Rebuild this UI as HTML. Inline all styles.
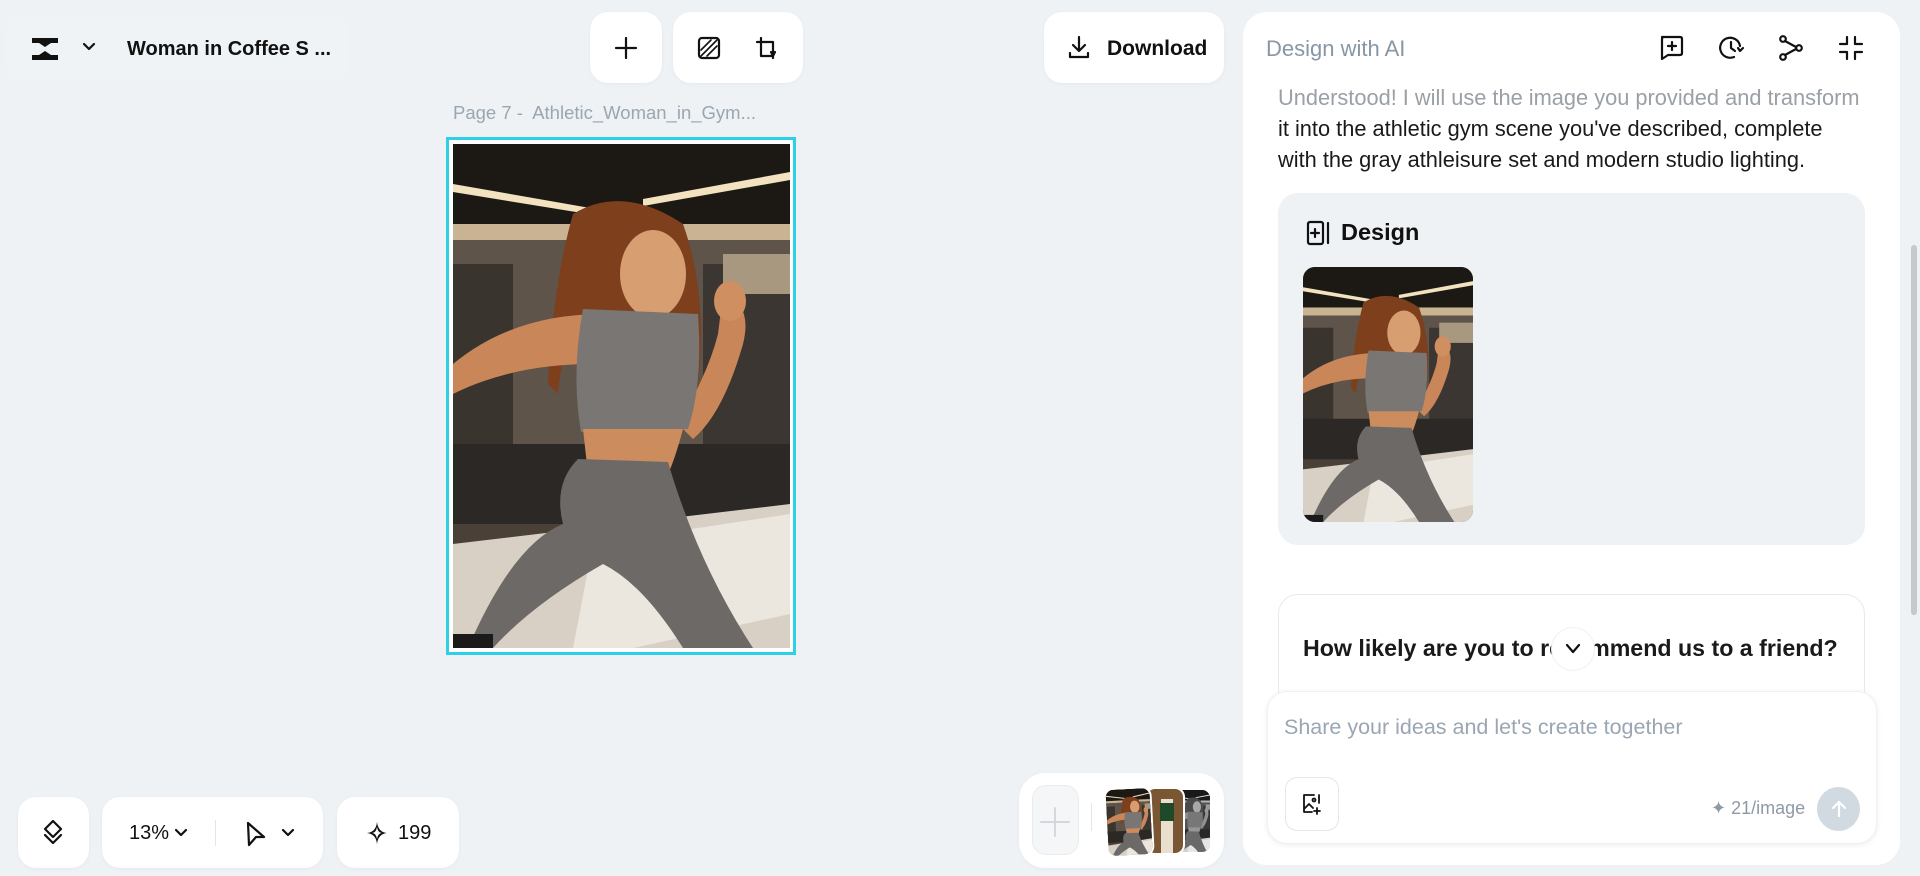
<!DOCTYPE html>
<html><head><meta charset="utf-8">
<style>
*{box-sizing:border-box;margin:0;padding:0}
body{width:1920px;height:876px;background:#eef2f5;font-family:"Liberation Sans",sans-serif;position:relative;overflow:hidden;color:#111}
.box{position:absolute;background:#fff;border-radius:18px;box-shadow:0 1px 4px rgba(0,0,0,.04)}
.ab{position:absolute;white-space:nowrap}
svg.i{position:absolute;fill:none;stroke:#111;stroke-width:2.2;stroke-linecap:round;stroke-linejoin:round}
</style></head><body>
<svg width="0" height="0" style="position:absolute">
<defs>
<symbol id="photo" viewBox="0 0 337 504" preserveAspectRatio="none">
<rect width="337" height="504" fill="#4a4038"/>
<rect width="337" height="100" fill="#1c1915"/>
<polygon points="0,40 160,68 160,74 0,48" fill="#f3e2c0"/>
<polygon points="190,55 337,28 337,36 190,62" fill="#f3e2c0"/>
<rect x="0" y="80" width="337" height="16" fill="#c9b393"/>
<rect x="0" y="96" width="337" height="220" fill="#5e544a"/>
<rect x="0" y="120" width="60" height="200" fill="#3a342f"/>
<rect x="250" y="120" width="87" height="200" fill="#3c3632"/>
<rect x="270" y="110" width="67" height="40" fill="#a89880"/>
<rect x="0" y="300" width="337" height="80" fill="#2b2825"/>
<polygon points="0,400 337,360 337,504 0,504" fill="#d8d0c4"/>
<polygon points="140,400 337,370 337,470 180,504 120,504" fill="#ebe6de"/>
<path d="M120,70 Q170,40 230,80 Q255,150 245,240 L220,250 L140,230 Q110,180 105,250 L95,240 Q100,140 120,70Z" fill="#7e3f1c"/>
<ellipse cx="200" cy="130" rx="33" ry="44" fill="#d79e72"/>
<path d="M0,220 Q60,170 150,170 L140,220 Q60,220 0,250Z" fill="#c98658"/>
<path d="M270,150 Q300,160 290,200 Q270,270 240,295 L225,280 Q255,230 265,190Z" fill="#c98658"/>
<ellipse cx="277" cy="157" rx="16" ry="20" fill="#cf8f60"/>
<path d="M130,165 L245,170 Q250,240 235,285 L128,288 Q118,230 130,165Z" fill="#7a7673"/>
<path d="M130,285 L230,285 Q222,315 215,330 L135,330Z" fill="#cc8c5e"/>
<path d="M125,315 L215,318 Q245,420 300,504 L230,504 Q190,440 150,420 Q80,460 40,504 L15,504 Q60,400 110,380 Q100,340 125,315Z" fill="#6c6966"/>
<rect x="0" y="490" width="40" height="14" fill="#1a1a1a"/>
</symbol>
</defs>
</svg>

<!-- top left -->
<div class="ab" style="left:6px;top:17px;width:344px;height:64px;background:#eff3f6;border-radius:16px"></div>
<svg class="i" style="left:30px;top:36px;fill:#111;stroke:none" width="30" height="26" viewBox="0 0 30 26"><path d="M2,2 H28 V7 H21 L15,11 L9,7 H2Z M2,24 H28 V19 H21 L15,15 L9,19 H2Z"/></svg>
<svg class="i" style="left:82px;top:42px" width="14" height="10" viewBox="0 0 14 10"><path d="M2,2 L7,7 L12,2"/></svg>
<div class="ab" style="left:127px;top:38px;font-size:20px;font-weight:bold">Woman in Coffee S ...</div>

<div class="box" style="left:590px;top:12px;width:72px;height:71px"></div>
<svg class="i" style="left:613px;top:35px" width="26" height="26" viewBox="0 0 26 26"><path d="M13,3 V23 M3,13 H23"/></svg>
<div class="box" style="left:673px;top:12px;width:130px;height:71px"></div>
<svg class="i" style="left:696px;top:35px" width="26" height="26" viewBox="0 0 26 26"><rect x="3" y="3" width="20" height="20" rx="3"/><path d="M5,21 L21,5 M5,15 L15,5 M11,21 L21,11" stroke-width="1.6"/></svg>
<svg class="i" style="left:753px;top:34px" width="28" height="28" viewBox="0 0 28 28"><path d="M8,4 V22 H20 M4,8 H20 V24"/><path d="M22,18 L20,22 L18,18" /></svg>

<div class="box" style="left:1044px;top:12px;width:180px;height:71px"></div>
<svg class="i" style="left:1066px;top:34px" width="26" height="26" viewBox="0 0 26 26"><path d="M13,3 V16 M7,11 L13,17 L19,11 M4,19 V23 H22 V19"/></svg>
<div class="ab" style="left:1107px;top:37px;font-size:21px;font-weight:bold">Download</div>

<div class="ab" style="left:453px;top:102px;font-size:18.5px;color:#9aa6b2">Page 7 -&nbsp; Athletic_Woman_in_Gym...</div>

<div class="ab" style="left:446px;top:137px;width:350px;height:518px;border:3px solid #2dd0e6;background:#fff"></div>
<svg class="ab" style="left:453px;top:144px" width="337" height="504"><use href="#photo"/></svg>

<!-- bottom left -->
<div class="box" style="left:18px;top:797px;width:71px;height:71px"></div>
<svg class="i" style="left:40px;top:818px" width="26" height="30" viewBox="0 0 26 30"><path d="M13,3 L21,11 L13,19 L5,11Z M5,17 L13,25 L21,17"/></svg>
<div class="box" style="left:102px;top:797px;width:221px;height:71px"></div>
<div class="ab" style="left:129px;top:822px;font-size:20px">13%</div>
<svg class="i" style="left:174px;top:828px" width="14" height="10" viewBox="0 0 14 10"><path d="M2,2 L7,7 L12,2"/></svg>
<div class="ab" style="left:215px;top:820px;width:1px;height:26px;background:#e2e6ea"></div>
<svg class="i" style="left:244px;top:820px" width="24" height="28" viewBox="0 0 24 28"><path d="M4,3 L20,17 L12,17 L5,25Z"/></svg>
<svg class="i" style="left:281px;top:828px" width="14" height="10" viewBox="0 0 14 10"><path d="M2,2 L7,7 L12,2"/></svg>
<div class="box" style="left:337px;top:797px;width:122px;height:71px"></div>
<svg class="i" style="left:366px;top:821px;fill:#111;stroke:none" width="22" height="24" viewBox="0 0 22 24"><path d="M11,1 Q12,11 21,12 Q12,13 11,23 Q10,13 1,12 Q10,11 11,1Z M11,6 Q10,12 6,12 Q10,12 11,18 Q12,12 16,12 Q12,12 11,6Z" fill-rule="evenodd"/></svg>
<div class="ab" style="left:398px;top:822px;font-size:20px">199</div>

<!-- bottom thumbnails -->
<div class="box" style="left:1019px;top:773px;width:205px;height:95px;border-radius:26px"></div>
<div class="ab" style="left:1032px;top:785px;width:47px;height:70px;border-radius:14px;background:#f4f6f8;border:1px solid #e8ecef"></div>
<svg class="i" style="left:1038px;top:805px;stroke:#d3d8de;stroke-width:2" width="34" height="34" viewBox="0 0 34 34"><path d="M17,3 V31 M3,17 H31"/></svg>
<div class="ab" style="left:1091px;top:803px;width:1px;height:28px;background:#e2e6ea"></div>
<div class="ab" style="left:1170px;top:788px;width:42px;height:66px;border-radius:10px;overflow:hidden;background:#888;border:2px solid #fff;filter:grayscale(1)"><svg width="42" height="66"><use href="#photo"/></svg></div>
<div class="ab" style="left:1145px;top:787px;width:40px;height:68px;border-radius:10px;overflow:hidden;background:#7a5632;border:2px solid #fff"><div style="position:absolute;left:14px;top:10px;width:12px;height:55px;background:#e9dfcf"></div><div style="position:absolute;left:13px;top:14px;width:14px;height:18px;background:#1f4a2a"></div></div>
<div class="ab" style="left:1105px;top:787px;width:48px;height:70px;border-radius:10px;overflow:hidden;border:2px solid #fff;transform:rotate(-3deg)"><svg width="48" height="70"><use href="#photo"/></svg></div>

<!-- right panel -->
<div class="ab" style="left:1243px;top:12px;width:657px;height:853px;background:#fff;border-radius:24px"></div>
<div class="ab" style="left:1266px;top:36px;font-size:22px;color:#8797a6">Design with AI</div>
<svg class="i" style="left:1657px;top:34px" width="28" height="28" viewBox="0 0 28 28"><path d="M5,3 H23 Q25,3 25,5 V19 Q25,21 23,21 H11 L5,25 V5 Q5,3 7,3Z M15,8 V16 M11,12 H19"/></svg>
<svg class="i" style="left:1717px;top:34px" width="28" height="28" viewBox="0 0 28 28"><path d="M23,12 A10,10 0 1 0 17,23 M14,8 V14 L18,17 M21,14 L23,17 L26,14"/></svg>
<svg class="i" style="left:1777px;top:34px" width="28" height="28" viewBox="0 0 28 28"><circle cx="6" cy="5" r="2.8"/><circle cx="6" cy="23" r="2.8"/><circle cx="22" cy="14" r="2.8"/><path d="M8,7 L19,13 M8,21 L19,15"/></svg>
<svg class="i" style="left:1837px;top:34px" width="28" height="28" viewBox="0 0 28 28"><path d="M10,3 V10 H3 M18,3 V10 H25 M10,25 V18 H3 M18,25 V18 H25"/></svg>

<div class="ab" style="left:1278px;top:82px;width:600px;font-size:21.8px;line-height:31px;color:#1a1a1a"><span style="color:#9aa0a6">Understood! I will use the image you provided and transform</span><br>it into the athletic gym scene you've described, complete<br>with the gray athleisure set and modern studio lighting.</div>

<div class="ab" style="left:1278px;top:193px;width:587px;height:352px;background:#eef2f5;border-radius:20px"></div>
<svg class="i" style="left:1305px;top:219px" width="26" height="28" viewBox="0 0 26 28"><rect x="3" y="3" width="15" height="22" rx="2"/><path d="M10,10 V18 M6,14 H14 M23,4 V24"/></svg>
<div class="ab" style="left:1341px;top:219px;font-size:23.5px;font-weight:bold">Design</div>
<div class="ab" style="left:1303px;top:267px;width:170px;height:255px;border-radius:12px;overflow:hidden"><svg width="170" height="255"><use href="#photo"/></svg></div>

<div class="ab" style="left:1278px;top:594px;width:587px;height:120px;border:1px solid #e6eaee;border-radius:20px"></div>
<div class="ab" style="left:1303px;top:635px;font-size:23.2px;font-weight:bold;color:#1a1a1a">How likely are you to recommend us to a friend?</div>
<div class="ab" style="left:1551px;top:627px;width:44px;height:44px;border-radius:50%;background:#fff;border:1px solid #eef0f2"></div>
<svg class="i" style="left:1564px;top:642px" width="18" height="14" viewBox="0 0 18 14"><path d="M3,3 L9,10 L15,3"/></svg>

<div class="ab" style="left:1267px;top:691px;width:610px;height:153px;background:#fff;border-radius:20px;box-shadow:0 1px 6px rgba(0,0,0,.08);border:1px solid #eef1f4"></div>
<div class="ab" style="left:1284px;top:715px;font-size:21.5px;color:#9aa6b2">Share your ideas and let's create together</div>
<div class="ab" style="left:1285px;top:777px;width:54px;height:54px;border:1px solid #e3e7eb;border-radius:12px"></div>
<svg class="i" style="left:1300px;top:792px;stroke-width:1.8" width="24" height="24" viewBox="0 0 24 24"><path d="M14,3 H4 V20 H12 M19,3 V11 M4,17 L9,12 L13,16 M17,16 V22 M14,19 H20"/><circle cx="14" cy="8" r="1.5"/></svg>
<div class="ab" style="left:1711px;top:798px;font-size:18px;color:#8f99a4">✦ 21/image</div>
<div class="ab" style="left:1817px;top:787px;width:43px;height:44px;border-radius:50%;background:#d1d9e1"></div>
<svg class="i" style="left:1828px;top:798px;stroke:#fff" width="22" height="22" viewBox="0 0 22 22"><path d="M11,18 V4 M5,10 L11,4 L17,10"/></svg>

<div class="ab" style="left:1911px;top:245px;width:6px;height:370px;border-radius:3px;background:#c4c9ce"></div>
</body></html>
